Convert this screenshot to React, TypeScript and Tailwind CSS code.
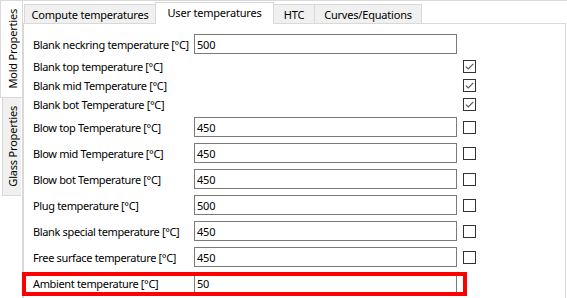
import React from "react";

const Check = ({ checked }: { checked: boolean }) => (
  <div className="w-[13px] h-[13px] border border-[#333333] bg-white flex items-center justify-center">
    {checked && (
      <svg width="11" height="11" viewBox="0 0 11 11">
        <path d="M1.8 5.6 L4.3 8 L9.3 2.8" fill="none" stroke="#5a5a5a" strokeWidth="1.2" />
      </svg>
    )}
  </div>
);

type RowProps = {
  label: string;
  value?: string;
  check?: boolean;
  className: string;
  children?: React.ReactNode;
};

const Row = ({ label, value, check, className, children }: RowProps) => (
  <div className={className}>
    <div className="w-[161px] whitespace-nowrap leading-none tracking-[-0.35px]">{label}</div>
    {value !== undefined ? (
      <div className="w-[263px] h-[20px] border border-[#7a7a7a] bg-white pl-[2px] flex items-center leading-none">
        {value}
      </div>
    ) : (
      <div className="w-[263px]" />
    )}
    {check !== undefined && (
      <div className="ml-[6px]">
        <Check checked={check} />
      </div>
    )}
    {children}
  </div>
);

export default function App() {
  return (
    <div
      className="w-[567px] h-[298px] bg-white flex overflow-hidden text-[11px] tracking-[-0.2px] text-black"
      style={{ fontFamily: '"Noto Sans", "Open Sans", sans-serif' }}
    >
      {/* Left vertical tabs */}
      <div className="w-[22px] flex flex-col shrink-0">
        <div className="h-[98px] bg-white border-t border-l border-b border-[#d9d9d9] flex items-center justify-center pl-[2px]">
          <span className="[writing-mode:vertical-rl] rotate-180 whitespace-nowrap leading-none">Mold Properties</span>
        </div>
        <div className="ml-[2px] w-[19px] h-[98px] bg-[#f0f0f0] border-l border-b border-[#d9d9d9] flex items-center justify-center pl-[1px]">
          <span className="[writing-mode:vertical-rl] rotate-180 whitespace-nowrap leading-none">Glass Properties</span>
        </div>
      </div>

      {/* Right outer pane */}
      <div className="flex-1 flex flex-col border-l border-t border-[#d9d9d9]">
        {/* Top tab bar */}
        <div className="h-[22px] flex items-end pl-[1px] shrink-0">
          <div className="w-[132px] h-[19px] bg-[#f0f0f0] border border-b-0 border-[#d9d9d9] flex items-center justify-center whitespace-nowrap leading-none">
            Compute temperatures
          </div>
          <div className="relative z-10 -ml-px mb-[-1px] w-[119px] h-[22px] bg-white border border-b-0 border-[#d9d9d9] flex items-center justify-center whitespace-nowrap leading-none pb-[2px]">
            User temperatures
          </div>
          <div className="-ml-px w-[42px] h-[19px] bg-[#f0f0f0] border border-b-0 border-[#d9d9d9] flex items-center justify-center whitespace-nowrap leading-none">
            HTC
          </div>
          <div className="-ml-px w-[108px] h-[19px] bg-[#f0f0f0] border border-b-0 border-[#d9d9d9] flex items-center justify-center whitespace-nowrap leading-none">
            Curves/Equations
          </div>
        </div>

        {/* Pane */}
        <div className="flex-1 mr-[1px] border-l border-t border-r border-[#d9d9d9] flex flex-col">
          <Row className="mt-[10px] h-[20px] flex items-center pl-[9px]" label="Blank neckring temperature [°C]" value="500" />
          <Row className="mt-[3px] h-[19px] flex items-center pl-[9px]" label="Blank top temperature [°C]" check={true} />
          <Row className="h-[19px] flex items-center pl-[9px]" label="Blank mid Temperature [°C]" check={true} />
          <Row className="h-[19px] flex items-center pl-[9px]" label="Blank bot Temperature [°C]" check={true} />
          <Row className="mt-[3px] h-[20px] flex items-center pl-[9px]" label="Blow top Temperature [°C]" value="450" check={false} />
          <Row className="mt-[6px] h-[20px] flex items-center pl-[9px]" label="Blow mid Temperature [°C]" value="450" check={false} />
          <Row className="mt-[6px] h-[20px] flex items-center pl-[9px]" label="Blow bot Temperature [°C]" value="450" check={false} />
          <Row className="mt-[6px] h-[20px] flex items-center pl-[9px]" label="Plug temperature [°C]" value="500" check={false} />
          <Row className="mt-[6px] h-[20px] flex items-center pl-[9px]" label="Blank special temperature [°C]" value="450" check={false} />
          <Row className="mt-[6px] h-[20px] flex items-center pl-[9px]" label="Free surface temperature [°C]" value="450" check={false} />
          <Row className="relative mt-[6px] h-[20px] flex items-center pl-[9px]" label="Ambient temperature [°C]" value="50">
            <div className="absolute left-[-2px] top-[-1px] w-[445px] h-[24px] border-[4px] border-[#ff0000] pointer-events-none" />
          </Row>
        </div>
      </div>
    </div>
  );
}
